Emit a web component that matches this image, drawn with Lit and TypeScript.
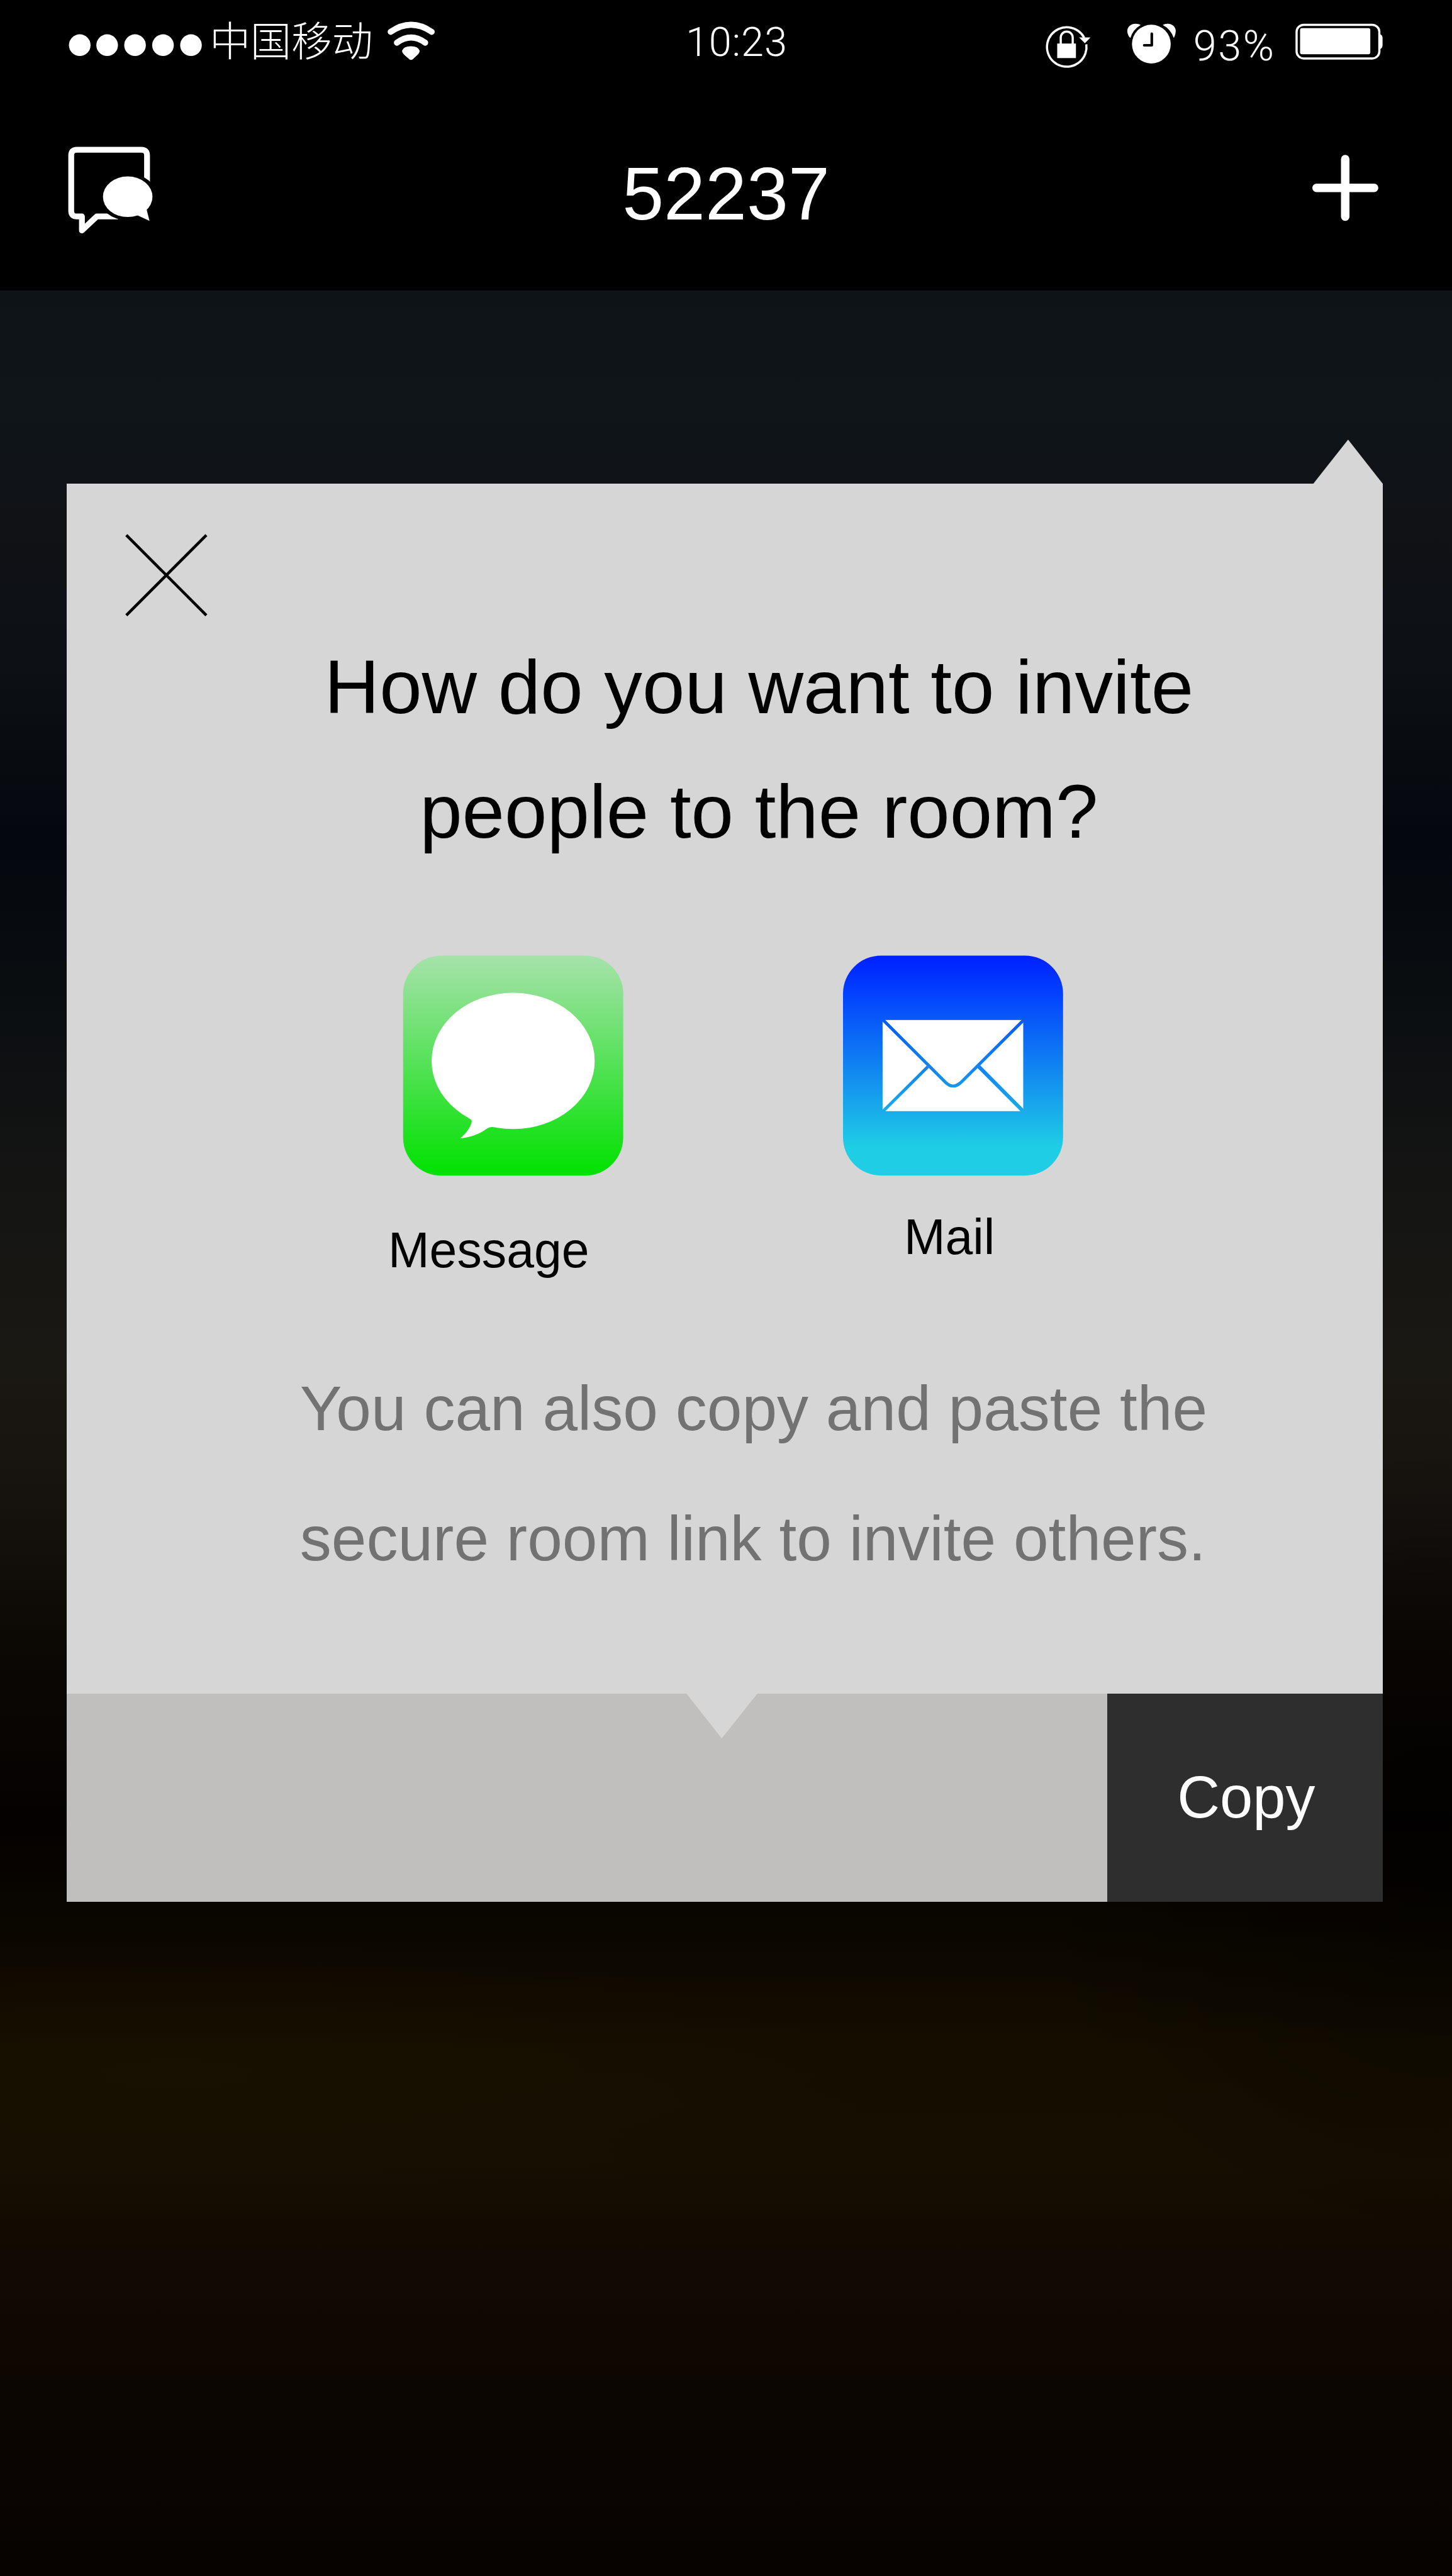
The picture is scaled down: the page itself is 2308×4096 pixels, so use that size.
import { LitElement, html, svg, css, unsafeCSS, TemplateResult } from "lit";
import { customElement } from "lit/decorators.js";

const SCALE = 2308 / 2667;
const u = (n: number) => unsafeCSS(`${(n * SCALE).toFixed(2)}px`);

/** An svg that shows the artboard region x, y, w, h. */
const region = (x: number, y: number, w: number, h: number, body: TemplateResult) => html`<svg
  width=${(w * SCALE).toFixed(2)}
  height=${(h * SCALE).toFixed(2)}
  viewBox="${x} ${y} ${w} ${h}"
  fill="none"
>${body}</svg>`;

@customElement("status-bar")
class StatusBar extends LitElement {
  static styles = css`
    :host {
      display: grid;
      grid-template-columns: 1fr auto 1fr;
      height: ${u(160)};
      padding: 0 ${u(125)} 0 ${u(125)};
      color: #fff;
      font-family: Roboto, "Liberation Sans", sans-serif;
      font-weight: 300;
      font-size: ${u(75)};
      white-space: nowrap;
    }
    svg { display: block; flex: none; }
    .group { display: flex; align-items: flex-start; }
    .end { justify-content: flex-end; }
    .carrier {
      margin: 0 ${u(25)} 0 ${u(12)};
      font-family: "Noto Sans CJK SC", sans-serif;
      font-size: ${u(75)};
      line-height: ${u(142)};
    }
    .time { padding-left: ${u(39)}; line-height: ${u(157)}; letter-spacing: ${u(1)}; }
    .percent {
      margin: 0 ${u(34)} 0 ${u(30)};
      font-size: ${u(77)};
      line-height: ${u(171)};
      letter-spacing: ${u(3)};
    }
  `;

  render() {
    const dots = [146.7, 197, 248.2, 299.6, 351];
    return html`
      <div class="group">
        ${region(125, 0, 248, 160, svg`${dots.map((x) => svg`<circle cx=${x} cy="83" r="19.9" fill="#fff"/>`)}`)}
        <span class="carrier">中国移动</span>
        ${region(710, 0, 92, 160, svg`
          <g stroke="#fff" stroke-width="11" stroke-linecap="round">
            <path d="M718 58.5Q755.7 32.5 793.5 58.5"/>
            <path d="M729.5 78.5Q755.5 59.5 781.5 78.5"/>
          </g>
          <path d="M739 93Q742 85 755.3 85Q768.500 85 771.3 93Q771.500 97 767 101L759 108.500Q755.400 111.500 752 108.500L743.500 101Q739 97 739 93Z" fill="#fff"/>`)}
      </div>
      <span class="time">10:23</span>
      <div class="group end">
        ${region(1915, 0, 90, 160, svg`
          <path d="M1993.3 81.500A36.300 36.300 0 1 1 1989.500 69.500" stroke="#fff" stroke-width="4"/>
          <path d="M1980 68.700H2001L1990.700 79.500Z" fill="#fff"/>
          <rect x="1939.800" y="80" width="34.400" height="26.700" fill="#fff"/>
          <path d="M1946.300 81V69A11 11 0 0 1 1968.300 69V81" stroke="#fff" stroke-width="4"/>`)}
        ${region(2005, 0, 155, 160, svg`
          <circle cx="2112.600" cy="81" r="35.600" fill="#fff"/>
          <path d="M2113.400 62V83.200H2099.500" stroke="#000" stroke-width="4.800" stroke-linecap="round" stroke-linejoin="round"/>
          <path d="M2074 70C2069.500 65 2068.300 60 2068.400 56C2069 49 2076 43.700 2083 43.700C2087 43.700 2091 44.500 2093 46A42 42 0 0 0 2074 70Z" fill="#fff"/>
          <path d="M2153.800 70C2156.500 65 2157.400 60 2157.400 56C2157 49 2150 43.700 2143 43.700C2139 43.700 2135.500 44.500 2133.600 46A42 42 0 0 1 2153.800 70Z" fill="#fff"/>`)}
        <span class="percent">93%</span>
        ${region(2377, 0, 165, 160, svg`
          <rect x="2381.600" y="45.700" width="152" height="61.700" rx="13" stroke="#fff" stroke-width="4"/>
          <rect x="2388" y="51.700" width="129" height="48" rx="3.500" fill="#fff"/>
          <path d="M2534 62.500Q2539.500 64 2539.500 70V83Q2539.500 89 2534 90.700Z" fill="#fff"/>`)}
      </div>`;
  }
}

@customElement("nav-bar")
class NavBar extends LitElement {
  static styles = css`
    :host {
      display: grid;
      grid-template-columns: 1fr auto 1fr;
      height: ${u(374)};
      padding: 0 ${u(125)};
      box-sizing: border-box;
      color: #fff;
    }
    svg { display: block; }
    .title {
      margin: 0;
      padding-top: ${u(10)};
      font-size: ${u(137)};
      font-weight: 400;
      line-height: ${u(374)};
      height: ${u(364)};
    }
    .end { justify-self: end; }
  `;

  render() {
    return html`
      <div>${region(125, 160, 160, 374, svg`
        <path d="M270.300 340V286Q270.300 275.700 260 275.700H141.300Q131 275.700 131 286V388Q131 398.300 141.300 398.300H150.700V424L178 398.300H217" stroke="#fff" stroke-width="10.700" stroke-linejoin="round"/>
        <ellipse cx="234.800" cy="362" rx="53" ry="43.500" fill="#000"/>
        <ellipse cx="234.800" cy="362" rx="45.500" ry="37.300" fill="#fff"/>
        <path d="M269.500 385L274.800 406.500L250 395Z" fill="#fff"/>`)}</div>
      <h1 class="title">52237</h1>
      <div class="end">${region(2405, 160, 137, 374, svg`
        <path d="M2418.500 345.800H2524.200M2471.200 292.800V398.600" stroke="#fff" stroke-width="15.600" stroke-linecap="round"/>`)}</div>`;
  }
}

@customElement("invite-card")
class InviteCard extends LitElement {
  static styles = css`
    :host { display: block; position: relative; width: ${u(2417)}; }
    svg { display: block; }
    .tip { position: absolute; right: 0; bottom: 100%; margin-bottom: -1px; }
    .body {
      height: ${u(2223.3)};
      padding: ${u(85)} 0 0 ${u(100)};
      box-sizing: border-box;
      background: #d6d6d6;
    }
    .question {
      width: ${u(1800)};
      margin: ${u(8.5)} 0 0 ${u(271)};
      font-size: ${u(140.1)};
      font-weight: 400;
      line-height: ${u(228.5)};
      text-align: center;
      color: #000;
    }
    .apps {
      display: flex;
      gap: ${u(400)};
      margin: ${u(148.5)} 0 0 ${u(515.5)};
      height: ${u(594)};
    }
    .app { width: ${u(408)}; font-size: ${u(91)}; line-height: ${u(105)}; color: #000; }
    .label { display: block; white-space: nowrap; }
    .message { margin: ${u(83.5)} 0 0 ${u(-25.5)}; }
    .mail { margin: ${u(59)} 0 0 ${u(114)}; }
    .hint {
      margin: ${u(120)} 0 0 ${u(328)};
      font-size: ${u(115.6)};
      line-height: ${u(239.3)};
      white-space: nowrap;
      color: #727272;
    }
    .footer { display: flex; position: relative; height: ${u(381.7)}; }
    .link { flex: 1; background: #c0bfbd; }
    .notch { position: absolute; top: -1px; left: ${u(1138)}; }
    .copy {
      width: ${u(506)};
      padding: 0 0 0 ${u(4)};
      box-sizing: border-box;
      border: 0;
      background: #2e2e2e;
      color: #fff;
      font: inherit;
      font-size: ${u(108.5)};
      line-height: ${u(375)};
      text-align: center;
    }
  `;

  render() {
    return html`
      <div class="tip">${region(2410, 807, 130, 82, svg`<path d="M2411 889L2475.700 807L2540 889Z" fill="#d6d6d6"/>`)}</div>
      <div class="body">
        ${region(223, 974, 165, 166, svg`<path d="M232 983L379 1130.500M379 983L232 1130.500" stroke="#000" stroke-width="5.200"/>`)}
        <h2 class="question">How do you want to invite<br>people to the room?</h2>
        <div class="apps">
          <div class="app">
            ${region(739, 1754, 408, 408, svg`
              <defs><linearGradient id="g" x1="0" y1="0" x2="0" y2="1">
                <stop offset="0" stop-color="#a7e2ab"/><stop offset="1" stop-color="#00e100"/>
              </linearGradient></defs>
              <rect x="741" y="1755.700" width="404.300" height="404.200" rx="70" fill="url(#g)"/>
              <ellipse cx="943.200" cy="1949.200" rx="149.800" ry="125.200" fill="#fff"/>
              <path d="M860 2054C866 2056.500 867.500 2058 867 2061C865 2072 855 2084 846 2091.500C867 2089.500 884 2082 896 2073Q901 2070 908 2071L915 2050Z" fill="#fff"/>`)}
            <span class="label message">Message</span>
          </div>
          <div class="app">
            ${region(1547, 1754, 408, 408, svg`
              <defs><linearGradient id="b" gradientUnits="userSpaceOnUse" x1="0" y1="1755.600" x2="0" y2="2159.800">
                <stop offset="0" stop-color="#0020ff"/><stop offset=".1" stop-color="#0033ff"/>
                <stop offset=".87" stop-color="#1fcde5"/><stop offset="1" stop-color="#1fcde5"/>
              </linearGradient></defs>
              <rect x="1549.300" y="1755.600" width="404.200" height="404.200" rx="70" fill="url(#b)"/>
              <rect x="1622" y="1874" width="258.300" height="167.500" fill="#fff"/>
              <g stroke="url(#b)" stroke-width="5.700">
                <path d="M1620.500 1871.500L1736.700 1987.700Q1751.300 2003 1767 1987.700L1883.500 1871.500"/>
                <path d="M1705 1960L1620.500 2044"/>
                <path d="M1798 1959L1883 2044.500" stroke-width="7"/>
              </g>`)}
            <span class="label mail">Mail</span>
          </div>
        </div>
        <div class="hint">You can also copy and paste the<br>secure room link to invite others.</div>
      </div>
      <div class="footer">
        <div class="link"></div>
        <button class="copy">Copy</button>
        <div class="notch">${region(1261, 3111, 131, 84, svg`<path d="M1261 3111V3112L1326 3194.500L1391.500 3112V3111Z" fill="#d6d6d6"/>`)}</div>
      </div>`;
  }
}

@customElement("app-root")
class AppRoot extends LitElement {
  static styles = css`
    :host {
      display: block;
      width: 2308px;
      height: 4096px;
      overflow: hidden;
      background: #000;
      font-family: "Liberation Sans", Arial, sans-serif;
    }
    .backdrop {
      height: ${u(4200)};
      padding: ${u(355)} 0 0 ${u(123)};
      box-sizing: border-box;
      background:
        radial-gradient(ellipse 50% 6% at 12% 78%, rgba(30, 20, 0, 0.3), transparent),
        radial-gradient(ellipse 30% 18% at 100% 68%, rgba(0, 0, 0, 0.5), transparent),
        linear-gradient(
          #0d1317 0%, #0f1519 5%, #101216 10%, #0c1014 17%, #04080e 24%, #080c10 29%,
          #131413 38%, #1a1813 47%, #16130f 53%, #0c0804 59%, #040201 67%, #0a0600 71.5%,
          #150e00 77%, #160e01 82%, #110902 87%, #0c0602 92%, #070301 100%
        );
    }
  `;

  render() {
    return html`
      <status-bar></status-bar>
      <nav-bar></nav-bar>
      <main class="backdrop"><invite-card></invite-card></main>`;
  }
}
